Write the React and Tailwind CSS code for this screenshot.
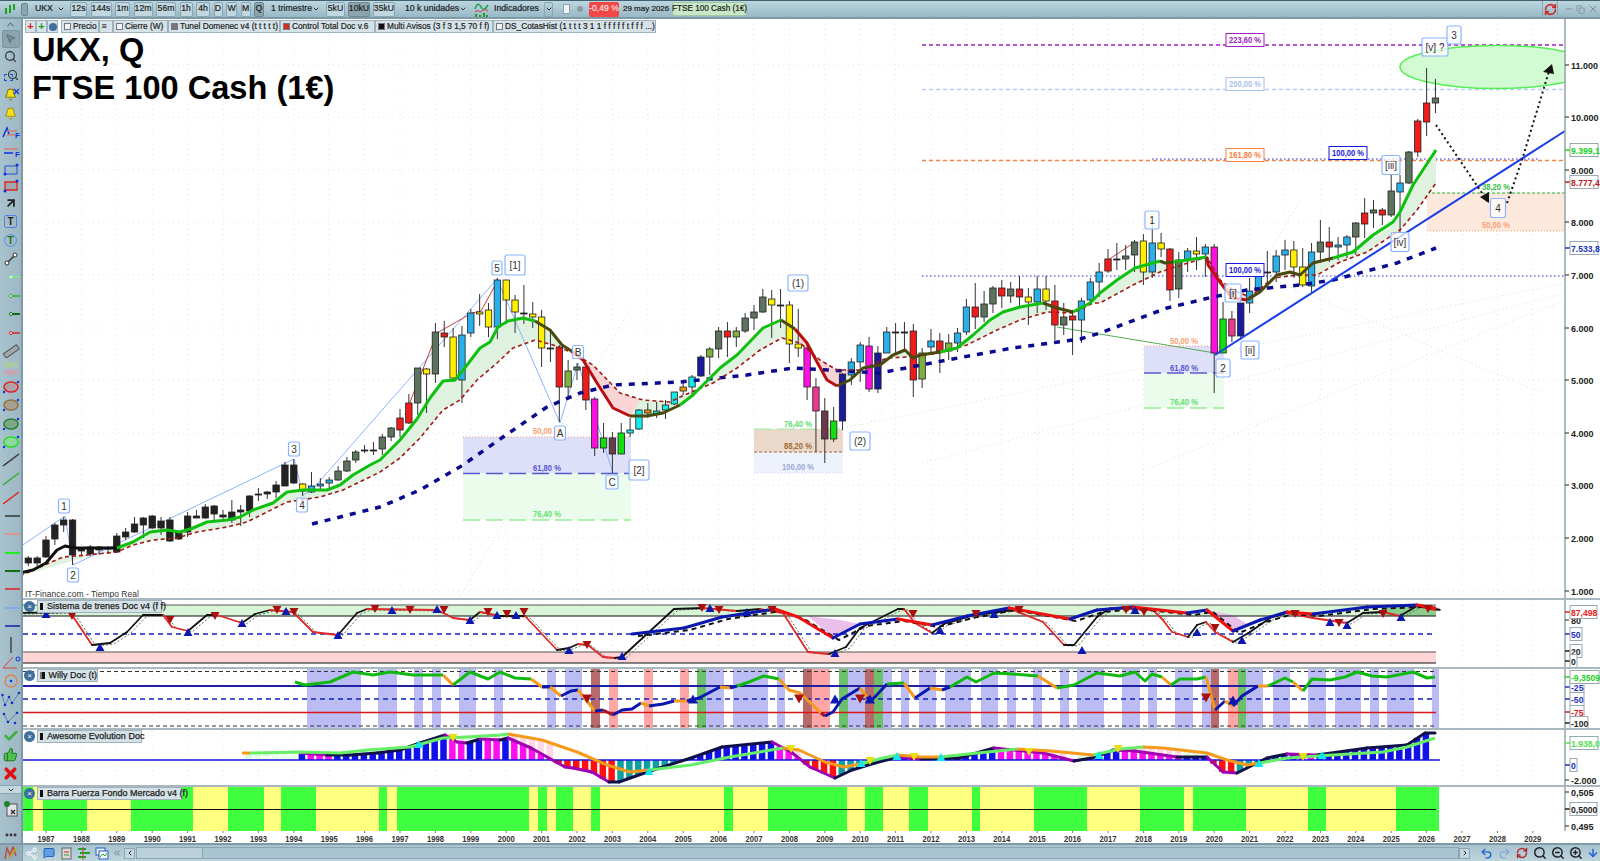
import React from "react";
import { Search, ZoomIn, ZoomOut, Undo2, Redo2, Share2, MessageSquare, Check, ThumbsUp, X, ChevronDown, ChevronUp, ChevronLeft, ChevronRight, ChevronsLeft, RefreshCw, Minus, Copy, MoreHorizontal, MousePointer2, Bell, ArrowDown } from "lucide-react";

const colors = { k: "#222222", g: "#5d735d", r: "#f01c1c", y: "#fff000", b: "#29b0e8", m: "#ff10e0", c: "#14ecec", G: "#10e010", d: "#6b3a4a", n: "#1a1a9a", p: "#e83a90", o: "#f09010", l: "#7fb040" };

// x, body top, body bottom, wick top, wick bottom, colour
const candles = [
  [28,558,563,556,566,"k"],[38,558,563,556,566,"k"],[46,540,557,536,558,"k"],[56,525,539,523,545,"k"],[64,520,525,517,532,"k"],[73,520,555,519,565,"k"],
  [83,548,551,548,556,"k"],[91,547,554,545,556,"k"],[100,547,550,546,555,"k"],[109,548,549,546,554,"k"],[117,536,552,533,553,"k"],[126,532,537,528,540,"k"],
  [135,524,532,517,533,"k"],[144,518,525,517,538,"k"],[152,516,528,515,529,"k"],[161,521,528,517,535,"k"],[170,520,541,517,542,"k"],[179,532,539,531,540,"k"],
  [188,516,532,512,537,"k"],[196,516,518,510,518,"k"],[205,507,518,504,519,"k"],[214,506,514,505,520,"k"],[223,515,517,510,521,"k"],[232,512,520,500,523,"k"],
  [241,510,512,505,526,"k"],[250,496,511,495,517,"k"],[258,494,495,488,501,"k"],[267,492,494,491,499,"k"],[276,485,492,481,498,"k"],[285,465,486,462,486,"k"],
  [294,465,483,459,484,"k"],[303,484,491,483,496,"y"],[312,486,492,472,493,"b"],[321,484,486,478,491,"b"],[329,480,483,477,489,"b"],[338,471,480,466,481,"g"],
  [347,461,471,457,472,"g"],[356,452,460,450,463,"g"],[365,450,450,445,453,"k"],[374,450,450,442,455,"k"],[382,437,449,434,455,"g"],[391,428,437,427,441,"g"],
  [400,418,430,409,437,"r"],[409,403,423,394,424,"r"],[418,368,403,368,415,"g"],[428,369,374,368,413,"y"],[437,332,374,323,383,"g"],[445,333,337,321,347,"r"],
  [454,337,378,328,382,"y"],[463,335,380,326,403,"b"],[472,313,333,309,337,"b"],[481,312,314,294,326,"y"],[489,310,327,303,337,"y"],[498,280,327,278,339,"b"],
  [507,280,300,280,324,"y"],[516,300,312,295,333,"y"],[525,313,313,285,324,"k"],[533,314,317,302,328,"y"],[542,317,348,310,367,"y"],[551,348,348,330,362,"k"],
  [560,347,387,345,422,"r"],[569,371,387,360,397,"l"],[578,367,370,363,380,"g"],[587,367,400,367,410,"r"],[596,399,448,397,456,"m"],[604,438,448,423,453,"G"],
  [613,438,454,432,473,"d"],[622,433,454,423,454,"G"],[631,430,433,418,437,"c"],[640,410,429,409,430,"c"],[648,410,413,403,418,"o"],[657,411,414,402,418,"c"],
  [666,405,410,400,419,"c"],[675,392,404,392,405,"c"],
  [684,387,391,383,395,"o"],[693,377,387,375,395,"c"],[702,357,376,355,377,"n"],[710,349,357,347,375,"l"],[719,331,349,327,358,"g"],[728,331,337,322,357,"r"],
  [737,331,337,327,347,"l"],[746,318,331,313,333,"g"],[754,312,318,305,330,"g"],[763,297,312,289,313,"g"],[773,299,305,290,338,"y"],[781,305,305,289,328,"k"],
  [790,305,344,301,363,"y"],[799,344,348,309,357,"y"],[808,348,387,345,400,"m"],[816,387,411,378,452,"p"],[825,411,439,398,463,"d"],[834,421,439,407,442,"G"],
  [843,374,421,373,430,"n"],[852,362,375,358,385,"b"],[860,345,362,342,382,"b"],[869,346,389,337,392,"m"],[878,353,389,346,393,"n"],[887,332,353,327,353,"b"],
  [896,332,332,323,355,"k"],[905,332,333,322,350,"k"],[914,331,380,324,397,"r"],[923,353,379,348,388,"l"],[932,341,347,329,355,"b"],[940,341,351,333,373,"r"],
  [949,343,351,334,360,"l"],[958,333,343,328,352,"b"],[967,307,332,299,335,"b"],[976,307,317,283,329,"r"],[985,304,317,291,322,"g"],[993,288,304,286,313,"g"],
  [1002,288,296,280,308,"r"],[1011,289,296,282,303,"g"],[1020,289,297,276,308,"r"],[1029,297,302,288,325,"y"],[1038,289,302,276,313,"b"],[1047,289,301,276,310,"y"],
  [1056,301,325,285,340,"r"],[1064,317,325,303,335,"g"],[1073,316,320,310,355,"r"],[1082,301,320,298,343,"b"],[1091,282,300,278,302,"b"],
  [1101,272,282,263,297,"b"],[1108,259,271,249,273,"r"],[1117,259,259,243,270,"k"],[1126,256,259,245,270,"g"],[1135,242,255,240,272,"g"],[1144,241,272,234,285,"y"],
  [1153,243,272,220,278,"b"],[1162,243,249,233,257,"y"],[1170,249,290,248,301,"r"],[1179,260,289,252,298,"g"],[1188,251,260,248,272,"b"],[1197,251,254,237,270,"y"],
  [1206,247,254,244,277,"b"],[1215,247,353,244,393,"m"],[1224,319,353,302,353,"G"],[1233,319,336,311,342,"p"],[1241,303,336,303,340,"n"],[1250,291,303,278,313,"b"],
  [1259,276,291,267,292,"b"],[1268,272,272,251,290,"k"],[1277,256,272,250,282,"b"],[1286,250,255,240,270,"b"],[1295,250,267,241,278,"y"],[1303,267,285,248,287,"y"],
  [1312,252,286,243,292,"b"],[1321,242,252,220,263,"g"],[1330,242,247,227,262,"r"],[1339,245,247,237,260,"b"],[1347,237,245,235,258,"b"],[1356,223,237,222,255,"g"],
  [1366,213,224,198,238,"r"],[1374,210,213,200,228,"g"],[1383,210,215,208,225,"r"],[1392,191,215,175,217,"g"],[1401,183,192,175,233,"b"],[1410,152,183,151,184,"g"],
  [1418,121,152,119,157,"r"],[1427,103,122,68,136,"r"],[1436,98,103,79,113,"g"],
];

const black1 = [[20,573],[33,570],[46,563],[57,550],[65,546],[75,548],[117,548]];
const green1 = [[117,548],[133,542],[150,532],[167,530],[180,532],[193,528],[207,522],[227,520],[240,517],[253,510],[273,503],[287,492],[303,490],[327,490],[340,485],[353,475],[370,465],[380,460],[400,440],[417,419],[430,398],[443,381],[455,380],[467,365],[480,348],[490,342],[498,327],[508,321],[523,318],[535,321]];
const dark1 = [[535,321],[550,330],[562,345],[573,352]];
const red1 = [[573,352],[583,360],[597,383],[613,408],[630,416]];
const dark2 = [[630,416],[647,416],[663,413],[680,405]];
const green2 = [[680,405],[693,395],[710,378],[720,368],[737,355],[763,328],[781,320]];
const dark3 = [[781,320],[795,329]];
const red2 = [[795,329],[807,343],[817,362],[827,380],[837,386]];
const dark4 = [[837,386],[850,380],[863,368],[880,365],[893,355],[905,350],[913,358],[920,355],[940,352]];
const green3 = [[940,352],[957,348],[973,335],[990,320],[1003,312],[1020,307],[1043,303]];
const dark5 = [[1043,303],[1057,308],[1073,312]];
const green4 = [[1073,312],[1090,303],[1100,293],[1117,280],[1135,268],[1160,261]];
const dark6 = [[1160,261],[1165,263],[1173,262]];
const green5 = [[1173,262],[1207,257]];
const red3 = [[1207,257],[1208,265],[1217,278],[1232,298],[1247,300]];
const dark7 = [[1247,300],[1260,292],[1277,275],[1290,272],[1300,275],[1313,263],[1333,258]];
const green6 = [[1333,258],[1353,252],[1373,235],[1393,222],[1400,212],[1413,185],[1436,150]];
const fast = [...black1,...green1,...dark1,...red1,...dark2,...green2,...dark3,...red2,...dark4,...green3,...dark5,...green4,...dark6,...green5,...red3,...dark7,...green6];
const slow = [[20,576],[40,567],[63,557],[87,555],[117,552],[133,545],[153,540],[177,538],[197,532],[227,527],[247,522],[267,512],[287,502],[320,497],[343,490],[370,477],[380,472],[400,458],[420,438],[443,410],[460,400],[477,380],[497,363],[513,348],[535,340],[553,345],[573,353],[593,365],[620,393],[643,400],[670,402],[680,397],[713,383],[737,368],[760,350],[782,338],[800,343],[820,360],[837,370],[860,370],[887,358],[907,357],[940,353],[967,345],[997,330],[1020,320],[1047,312],[1073,313],[1093,303],[1100,303],[1133,285],[1160,272],[1207,257],[1220,280],[1233,290],[1250,297],[1273,278],[1297,275],[1317,275],[1340,262],[1367,252],[1400,230],[1417,210],[1436,183]];
const navyMa = [[312,524],[380,507],[420,490],[463,465],[503,437],[547,407],[580,393],[613,385],[680,382],[747,375],[793,368],[880,373],[947,360],[1013,348],[1080,339],[1100,333],[1167,308],[1213,297],[1247,290],[1300,285],[1333,280],[1397,263],[1436,248]];

const waveLabels = [
  [64,506,"1",11,14],[73,575,"2",11,14],[294,449,"3",11,14],[302,505,"4",11,14],[497,268,"5",10,14],[515,265,"[1]",20,20],[560,433,"A",11,14],[578,352,"B",11,13],
  [612,482,"C",12,14],[639,470,"[2]",20,20],[798,283,"(1)",20,16],[860,441,"(2)",20,18],[1152,220,"1",14,18],[1391,165,"[iii]",18,19],[1400,242,"[iv]",18,19],
  [1435,47,"[v] ?",26,18],[1454,35,"3",14,18],[1498,208,"4",15,19],[1223,368,"2",14,18],[1250,350,"[ii]",18,18],[1233,293,"[i]",16,18],
];

const fibLabels = [
  [547,431,"50,00 %","#f9a070"],[547,468,"61,80 %","#5858d0"],[547,514,"76,40 %","#60e070"],[798,424,"76,40 %","#60e070"],[798,446,"88,20 %","#a06a30"],[798,467,"100,00 %","#9aa8d8"],
  [1184,341,"50,00 %","#f9a070"],[1184,368,"61,80 %","#5858d0"],[1184,402,"76,40 %","#60e070"],[1496,187,"38,20 %","#30c040"],[1496,225,"50,00 %","#f9a070"],
];

const boxedLabels = [
  [1245,40,"223,60 %","#a020c0"],[1245,84,"200,00 %","#a8c0f0"],[1245,155,"161,80 %","#f98040"],[1348,153,"100,00 %","#1818e0"],[1245,270,"100,00 %","#1818e0"],
];

const trend1 = [[20,613],[70,612],[92,645],[110,643],[127,632],[143,615],[163,615],[172,627],[188,631],[207,615],[217,615],[242,623],[255,614],[270,610],[293,612],[313,632],[338,635],[357,613],[367,609],[437,610],[453,618],[470,620],[480,612],[500,616],[525,616],[557,650],[569,648],[578,644],[588,645],[603,657],[615,658],[622,657],[674,609],[703,608],[737,611],[760,609],[783,613],[808,652],[829,654],[846,647],[860,628],[898,609],[904,609],[915,623],[932,633],[944,624],[975,615],[1013,610],[1043,622],[1064,645],[1074,645],[1097,617],[1110,608],[1153,610],[1163,620],[1172,632],[1188,637],[1197,625],[1206,622],[1215,632],[1233,642],[1250,632],[1270,618],[1287,613],[1313,618],[1347,623],[1363,613],[1383,612],[1400,616],[1417,606],[1435,610]];
const trend2 = [[632,634],[684,628],[722,617],[775,609],[798,617],[833,638],[860,624],[898,619],[932,625],[967,616],[1009,608],[1070,619],[1097,610],[1133,607],[1187,613],[1207,610],[1233,631],[1260,620],[1287,612],[1313,614],[1367,607],[1417,605],[1435,608]];
const blueUp1 = [[46,614],[100,647],[188,632],[242,623],[286,611],[338,635],[392,610],[437,609],[470,620],[497,615],[516,615],[569,650],[622,656],[710,608],[747,612],[835,653],[940,630],[994,614],[1082,650],[1135,610],[1197,632],[1242,640],[1330,622],[1347,625],[1401,617]];
const redDown1 = [[72,616],[170,620],[215,616],[277,610],[294,612],[375,609],[410,610],[444,610],[488,612],[507,614],[524,612],[587,645],[702,608],[719,610],[772,610],[913,614],[976,614],[1019,610],[1126,610],[1144,612],[1215,628],[1295,614],[1339,623],[1383,614],[1428,609]];

const willyBars = [
  [307,361,"b"],[378,397,"b"],[414,423,"b"],[432,441,"b"],[459,476,"b"],[494,503,"b"],[547,556,"b"],[565,582,"b"],[591,600,"d"],[609,618,"p"],[644,653,"p"],[680,689,"p"],[697,706,"g"],[706,724,"b"],[733,768,"b"],[777,785,"b"],
  [803,812,"d"],[812,830,"p"],[839,848,"g"],[848,865,"b"],[865,874,"d"],[874,883,"g"],[883,892,"b"],[901,909,"b"],[919,936,"b"],[945,971,"b"],[981,998,"b"],[1007,1016,"b"],[1033,1042,"b"],[1060,1069,"b"],[1077,1104,"b"],
  [1122,1140,"b"],[1148,1157,"b"],[1175,1193,"b"],[1202,1211,"b"],[1211,1219,"d"],[1228,1238,"p"],[1238,1246,"g"],[1246,1263,"b"],[1273,1290,"b"],[1308,1326,"b"],[1335,1361,"b"],[1370,1379,"b"],[1387,1414,"b"],[1432,1439,"b"],
];
const willyColor = { b: "#bcbcf4", d: "#b86a6a", p: "#ffa6a6", g: "#6cc06c" };

const G = "#10b810", O = "#f59a1a", B = "#0a18b0", R = "#a81030";
const willyLine = [
  [G,[[295,682],[305,685],[330,682],[353,672],[373,675],[390,672],[413,675],[443,675]]],[O,[[443,675],[453,685]]],[G,[[453,685],[470,672],[488,679],[500,672],[515,678],[531,679]]],[O,[[531,679],[542,687]]],[B,[[542,687],[550,687]]],[O,[[550,687],[561,696]]],[B,[[561,696],[571,691],[578,690]]],[O,[[578,690],[595,711]]],[B,[[595,711],[603,710]]],[R,[[603,710],[613,715]]],[B,[[613,715],[622,710],[632,709],[641,703]]],[O,[[641,703],[649,706]]],[B,[[649,706],[663,704],[674,701]]],[O,[[674,701],[687,701]]],[B,[[687,701],[699,698],[720,687]]],[O,[[720,687],[730,688]]],[B,[[730,688],[737,686]]],[G,[[737,686],[749,682],[764,676],[779,679]]],[O,[[779,679],[789,690],[800,693],[821,713]]],[R,[[821,713],[825,716]]],[B,[[825,716],[833,712],[842,699],[860,688]]],[O,[[860,688],[867,697]]],[B,[[867,697],[871,701],[887,684]]],[G,[[887,684],[904,683]]],[O,[[904,683],[915,698]]],[B,[[915,698],[930,688]]],[O,[[930,688],[942,690]]],[B,[[942,690],[950,687]]],[G,[[950,687],[967,677],[976,682],[994,673],[1013,674],[1038,676]]],[O,[[1038,676],[1057,688]]],[G,[[1057,688],[1074,685],[1097,673],[1120,676],[1135,672],[1145,681],[1152,674],[1162,677]]],[O,[[1162,677],[1171,685]]],[G,[[1171,685],[1180,679],[1197,679],[1206,677]]],[O,[[1206,677],[1215,710]]],[B,[[1215,710],[1225,701]]],[O,[[1225,701],[1233,706]]],[B,[[1233,706],[1242,696],[1258,686]]],[O,[[1258,686],[1268,686]]],[G,[[1268,686],[1285,678],[1293,682]]],[O,[[1293,682],[1303,691]]],[G,[[1303,691],[1312,679],[1330,680],[1345,677],[1357,672],[1372,676],[1387,677],[1413,672],[1427,678],[1435,677]]],
];

const sigGreen = "#66ee66";
const signal = [
  [O,[[242,753],[250,753]]],[sigGreen,[[250,753],[300,752],[340,753],[367,750],[410,747],[443,738],[467,737],[500,735],[508,734]]],[O,[[508,734],[542,740],[577,752],[607,765],[630,772],[649,770]]],[sigGreen,[[649,770],[691,765],[730,757],[783,748]]],[O,[[783,748],[799,750],[825,762],[844,767],[860,764]]],[sigGreen,[[860,764],[883,758],[898,755]]],[O,[[898,755],[921,757],[940,757]]],[sigGreen,[[940,757],[978,753],[1017,749]]],[O,[[1017,749],[1051,751],[1093,755]]],[sigGreen,[[1093,755],[1120,749],[1143,747]]],[O,[[1143,747],[1163,748],[1207,753],[1227,760],[1247,765],[1260,763]]],[sigGreen,[[1260,763],[1287,758],[1333,755],[1383,752],[1407,747],[1435,738]]],
];
const signalPts = signal.flatMap((s) => s[1]);
const macd = [[250,758],[300,753],[327,755],[350,755],[377,753],[400,750],[420,743],[445,735],[457,742],[467,743],[480,739],[500,740],[508,738],[531,748],[565,767],[573,768],[592,772],[609,782],[619,782],[653,770],[691,758],[722,747],[772,742],[791,752],[810,767],[835,778],[852,770],[875,763],[898,757],[921,759],[959,758],[994,748],[1043,753],[1074,761],[1097,757],[1113,750],[1135,751],[1177,757],[1207,757],[1223,772],[1237,773],[1267,758],[1287,754],[1317,755],[1367,748],[1407,745],[1425,733],[1435,733]];
const awesomeUp = [[419,744],[649,771],[861,763],[897,756],[941,757],[1099,755],[1259,763],[1322,755]];
const awesomeDown = [[453,738],[791,749],[870,761],[914,757],[1029,752],[1118,749],[1303,757]];

const strength = [[23,33,1],[33,43,0],[43,87,1],[87,131,0],[131,193,1],[193,228,0],[228,264,1],[264,281,0],[281,316,1],[316,379,0],[379,387,1],[387,397,0],[397,529,1],[529,538,0],[538,547,1],[547,556,0],[556,573,1],[573,591,0],[591,600,1],[600,724,0],[724,733,1],[733,768,0],[768,847,1],[847,865,0],[865,883,1],[883,909,0],[909,928,1],[928,972,0],[972,980,1],[980,1034,0],[1034,1087,1],[1087,1140,0],[1140,1184,1],[1184,1193,0],[1193,1246,1],[1246,1308,0],[1308,1326,1],[1326,1396,0],[1396,1439,1]];

const pts = (list) => list.map((p) => p.join(",")).join(" ");
const snap = (x) => 46 + Math.round((x - 46) / 8.85) * 8.85;
const interp = (list, x) => {
  for (let i = 1; i < list.length; i++) {
    if (x <= list[i][0]) {
      const [x0, y0] = list[i - 1];
      const [x1, y1] = list[i];
      return y0 + ((y1 - y0) * (x - x0)) / (x1 - x0 || 1);
    }
  }
  return list[list.length - 1][1];
};

const Line = ({ p, c, w = 2, dash }) => <polyline points={pts(p)} fill="none" stroke={c} strokeWidth={w} strokeDasharray={dash} strokeLinejoin="round" />;

const SlopeLine = ({ p, up, down, w }) =>
  p.slice(1).map((q, i) => <line key={i} x1={p[i][0]} y1={p[i][1]} x2={q[0]} y2={q[1]} stroke={q[1] > p[i][1] ? down : up} strokeWidth={w} strokeLinecap="round" />);

const TriUp = ({ x, y, c, s = 4 }) => <polygon points={`${x},${y - s} ${x - s - 0.5},${y + s} ${x + s + 0.5},${y + s}`} fill={c} />;
const TriDown = ({ x, y, c, s = 4 }) => <polygon points={`${x},${y + s} ${x - s - 0.5},${y - s} ${x + s + 0.5},${y - s}`} fill={c} />;

const Grid = ({ y0, y1, rows = [] }) => (
  <g stroke="#e4e6e8" strokeWidth="1" strokeDasharray="1 4">
    {rows.map((y) => <line key={y} x1="23" x2="1565" y1={y} y2={y} />)}
    {Array.from({ length: 43 }, (_, i) => 46 + i * 35.4).map((x) => <line key={x} x1={x} x2={x} y1={y0} y2={y1} />)}
  </g>
);

const AxisLine = ({ y0, y1 }) => <line x1="1565" x2="1565" y1={y0} y2={y1} stroke="#90a4ae" strokeWidth="1.5" />;

const AxisText = ({ y, t, c = "#222222" }) => (
  <g>
    <line x1="1565" x2="1569" y1={y} y2={y} stroke={c} />
    <text x="1571" y={y + 3.5} fontSize="9" fontWeight="700" fill={c}>{t}</text>
  </g>
);

const AxisTag = ({ y, t, c, w = 28 }) => (
  <g>
    <line x1="1565" x2="1570" y1={y} y2={y} stroke={c} strokeWidth="1.5" />
    <rect x="1570" y={y - 6.5} width={w} height="13" fill="#ffffff" stroke="#9aa8b0" />
    <text x="1571" y={y + 3.5} fontSize="8.6" fontWeight="700" fill={c}>{t}</text>
  </g>
);

const MainChart = () => (
  <svg width="1577" height="579" viewBox="23 19 1577 579" className="block">
    <Grid y0={19} y1={598} rows={[65, 117, 170, 222, 275, 328, 380, 433, 485, 538, 591]} />
    <g stroke="#dcdcdc" strokeWidth="1" strokeDasharray="1 3" fill="none">
      <line x1="460" y1="596" x2="630" y2="310" />
      <line x1="843" y1="428" x2="1565" y2="283" />
      <line x1="923" y1="463" x2="1565" y2="293" />
      <line x1="1145" y1="470" x2="1565" y2="300" />
      <line x1="1162" y1="233" x2="1540" y2="392" />
      <line x1="827" y1="462" x2="1020" y2="285" />
      <line x1="1224" y1="330" x2="1300" y2="200" />
    </g>

    {/* fibo zones */}
    <rect x="463" y="437" width="168" height="36.5" fill="#dedff8" />
    <rect x="463" y="473.5" width="168" height="46.5" fill="#ecfcec" />
    <line x1="463" x2="631" y1="437" y2="437" stroke="#f9a070" strokeDasharray="1 2" />
    <line x1="463" x2="631" y1="473.5" y2="473.5" stroke="#5858d0" strokeWidth="1.5" strokeDasharray="17 6" />
    <line x1="463" x2="631" y1="520" y2="520" stroke="#98ec98" strokeWidth="1.5" strokeDasharray="17 6" />
    <rect x="754" y="429" width="89" height="23" fill="#ead9cb" />
    <rect x="754" y="452" width="89" height="21" fill="#eef2fd" />
    <line x1="754" x2="843" y1="429" y2="429" stroke="#98ec98" strokeDasharray="17 6" />
    <line x1="754" x2="843" y1="452" y2="452" stroke="#9a6a3a" strokeDasharray="3 2" />
    <line x1="754" x2="843" y1="473" y2="473" stroke="#c8d4f4" strokeDasharray="1 2" />
    <rect x="1144" y="346" width="80" height="27" fill="#dedff8" />
    <rect x="1144" y="373" width="80" height="35" fill="#ecfcec" />
    <line x1="1144" x2="1224" y1="346" y2="346" stroke="#f9a070" strokeDasharray="1 2" />
    <line x1="1144" x2="1224" y1="373" y2="373" stroke="#5858d0" strokeWidth="1.5" strokeDasharray="17 6" />
    <line x1="1144" x2="1224" y1="408" y2="408" stroke="#98ec98" strokeWidth="1.5" strokeDasharray="17 6" />
    <rect x="1427" y="193" width="138" height="38" fill="#fde8dc" />
    <line x1="1427" x2="1565" y1="193" y2="193" stroke="#20b030" strokeDasharray="3 2" />
    <line x1="1427" x2="1565" y1="231" y2="231" stroke="#f9a070" strokeDasharray="1 2" />

    {/* horizontal levels */}
    <line x1="922" x2="1565" y1="45" y2="45" stroke="#a020c0" strokeWidth="1.5" strokeDasharray="4 3" />
    <line x1="922" x2="1565" y1="89.5" y2="89.5" stroke="#b8ccf6" strokeWidth="1.5" strokeDasharray="4 3" />
    <line x1="922" x2="1565" y1="160.5" y2="160.5" stroke="#f98040" strokeWidth="1.5" strokeDasharray="4 3" />
    <line x1="1152" x2="1540" y1="159" y2="159" stroke="#7070f0" strokeWidth="1.5" strokeDasharray="1.5 2.5" />
    <line x1="922" x2="1565" y1="276" y2="276" stroke="#7070f0" strokeWidth="1.5" strokeDasharray="1.5 2.5" />

    {/* target ellipse */}
    <clipPath id="plot"><rect x="23" y="19" width="1542" height="579" /></clipPath>
    <ellipse cx="1497" cy="67" rx="97" ry="21.5" fill="#d3fbd3" stroke="#55ee55" strokeWidth="1.5" clipPath="url(#plot)" />

    {/* averages */}
    <polygon points={pts([...fast.slice(6), ...[...slow].reverse()])} fill="#dff2df" />
    <polygon points={pts([...red1, [640,400], [620,393], [593,365]])} fill="#fbd5d5" />
    <polygon points={pts([...red2, [850,372], [860,370], [837,370], [820,360], [800,343]])} fill="#fbd5d5" />
    <polygon points={pts([...red3, [1250,297], [1233,290], [1220,280]])} fill="#fbd5d5" />

    {/* thin wave lines */}
    <Line p={[[20,547],[65,516],[73,565],[294,459],[303,495],[312,490],[497,279],[560,423],[578,363],[613,473]]} c="#8ab4ff" w={1} />
    <Line p={[[405,415],[437,333],[472,313],[481,311],[498,280]]} c="#c04040" w={1} />
    <Line p={[[1108,260],[1135,242]]} c="#c04040" w={1} />
    <Line p={[[1057,327],[1215,353]]} c="#55aa55" w={1} />

    {/* candles */}
    {candles.map(([x, t, b, wt, wb, c], i) => {
      const cx = snap(x);
      return (
        <g key={i}>
          <line x1={cx} x2={cx} y1={wt} y2={wb} stroke="#333333" strokeWidth="1" />
          <rect x={cx - 3.2} y={t} width="6.4" height={Math.max(b - t, 1)} fill={colors[c]} stroke="#222222" strokeWidth="0.8" />
        </g>
      );
    })}

    <Line p={navyMa} c="#0a0a90" w={3.5} dash="6 7" />
    <Line p={slow} c="#a01818" w={1.6} dash="4 3" />
    <Line p={black1} c="#111111" w={3} />
    {[green1, green2, green3, green4, green5, green6].map((p, i) => <Line key={i} p={p} c="#10c010" w={3} />)}
    {[dark1, dark2, dark3, dark4, dark5, dark6, dark7].map((p, i) => <Line key={i} p={p} c="#4a4a10" w={3} />)}
    {[red1, red2, red3].map((p, i) => <Line key={i} p={p} c="#b81010" w={3} />)}

    <line x1="1215" y1="355" x2="1565" y2="131" stroke="#1a3fe8" strokeWidth="2" />
    <Line p={[[1436,125],[1488,202]]} c="#111111" w={2} dash="2 3" />
    <Line p={[[1507,203],[1522,160],[1550,68]]} c="#111111" w={2} dash="2 3" />
    <polygon points="1480,197 1489,192 1489,203" fill="#111111" />
    <polygon points="1552,64 1543,72 1554,74" fill="#111111" />

    {fibLabels.map(([x, y, t, c]) => <text key={x + t + y} x={x} y={y + 3} textAnchor="middle" fontSize="9" fontWeight="700" fill={c} textLength={t.length === 7 ? 28 : 32} lengthAdjust="spacingAndGlyphs">{t}</text>)}
    {boxedLabels.map(([x, y, t, c]) => (
      <g key={x + t + y}>
        <rect x={x - 19} y={y - 6.5} width="38" height="13" fill="#ffffff" stroke={c} />
        <text x={x} y={y + 3} textAnchor="middle" fontSize="9" fontWeight="700" fill={c} textLength="32" lengthAdjust="spacingAndGlyphs">{t}</text>
      </g>
    ))}
    {waveLabels.map(([x, y, t, w, h]) => (
      <g key={x + t}>
        <rect x={x - w / 2} y={y - h / 2} width={w} height={h} rx="2" fill="#ffffff" fillOpacity="0.75" stroke="#8ab4ff" strokeWidth="1.2" />
        <text x={x} y={y + 3.5} textAnchor="middle" fontSize="10" fill="#333333">{t}</text>
      </g>
    ))}
    <text x="25" y="597" fontSize="8.5" fill="#333333">IT-Finance.com - Tiempo Real</text>

    <AxisLine y0={19} y1={598} />
    {["11.000","10.000","9.000","8.000","7.000","6.000","5.000","4.000","3.000","2.000","1.000"].map((t, i) => (
      <AxisText key={t} y={[65,117,170,222,275,328,380,433,485,538,591][i]} t={t} />
    ))}
    <AxisTag y={150} t="9.399,1" c="#20d020" w={28} />
    <AxisTag y={182} t="8.777,4" c="#c02020" w={28} />
    <AxisTag y={248} t="7.533,8" c="#2030c0" w={28} />
  </svg>
);

const PanelTag = ({ title, icon = "#777777", w }) => (
  <div className="absolute left-[1px] top-[0px] flex items-center">
    <span className="w-[11px] h-[11px] rounded-full bg-[#3f6f9c] text-white text-[8px] leading-[11px] text-center">×</span>
    <div className="ml-[2px] flex items-center h-[13px] bg-[#d5e3e8] border border-[#9fb2bb]" style={{ width: w }}>
      <span className="w-[7px] h-[7px] ml-[2px] border-r-[3px]" style={{ background: icon, borderColor: "#111111" }} />
      <span className="ml-[4px] text-[9px] [-webkit-text-stroke:0.25px_#222222] text-[#222222] whitespace-nowrap">{title}</span>
    </div>
  </div>
);

const SistemaPanel = () => (
  <svg width="1577" height="67" viewBox="23 600 1577 67" className="block">
    <Grid y0={600} y1={667} />
    <rect x="23" y="605" width="1413" height="11" fill="#d8f5d8" />
    <rect x="23" y="652" width="1413" height="11" fill="#ffd5d5" />
    <polygon points="1385,608 1417,605 1436,608 1436,616 1385,616" fill="#8ccc8c" />
    <polygon points="1207,610 1233,631 1247,624 1233,615" fill="#eac0ea" />
    <polygon points="808,616 833,638 860,624 840,620" fill="#eac0ea" />
    <line x1="23" x2="1436" y1="605" y2="605" stroke="#555555" />
    <line x1="23" x2="1436" y1="616" y2="616" stroke="#111111" />
    <line x1="23" x2="1436" y1="634" y2="634" stroke="#1020c0" strokeWidth="1.5" strokeDasharray="5 4" />
    <line x1="23" x2="1436" y1="652" y2="652" stroke="#555555" />
    <line x1="23" x2="1436" y1="663" y2="663" stroke="#111111" />
    <polyline points={pts(trend1.map(([x, y]) => [x + 4, y + 1]))} fill="none" stroke="#557755" strokeWidth="1" strokeDasharray="2 2" />
    <SlopeLine p={trend1} up="#111111" down="#e02828" w={1.8} />
    <polyline points={pts(trend2.map(([x, y]) => [x + 6, y + 2]))} fill="none" stroke="#111111" strokeWidth="2" strokeDasharray="5 4" />
    <SlopeLine p={trend2} up="#0a18b0" down="#f01010" w={3} />
    {blueUp1.map(([x, y]) => <TriUp key={x} x={x} y={y} c="#0a18b0" />)}
    {redDown1.map(([x, y]) => <TriDown key={x} x={x} y={y} c="#a81010" />)}
    <AxisLine y0={600} y1={667} />
    <AxisText y={620} t="80" />
    <AxisTag y={634} t="50" c="#2030c0" w={12} />
    <AxisTag y={651} t="20" c="#222222" w={12} />
    <AxisTag y={661} t="0" c="#222222" w={7} />
    <AxisTag y={612} t="87,498" c="#e82020" w={27} />
  </svg>
);

const WillyPanel = () => (
  <svg width="1577" height="59" viewBox="23 669 1577 59" className="block">
    <Grid y0={669} y1={728} />
    {willyBars.map(([a, b, k]) => <rect key={a} x={a} y="669" width={b - a} height="59" fill={willyColor[k]} />)}
    <line x1="23" x2="1436" y1="671.5" y2="671.5" stroke="#333333" strokeWidth="1.2" strokeDasharray="4 3" />
    <line x1="23" x2="1436" y1="686" y2="686" stroke="#2020a0" strokeWidth="1.8" />
    <line x1="23" x2="1436" y1="699" y2="699" stroke="#1020c0" strokeWidth="1.5" strokeDasharray="5 4" />
    <line x1="23" x2="1436" y1="712.5" y2="712.5" stroke="#d81818" strokeWidth="1.5" />
    <line x1="23" x2="1436" y1="726" y2="726" stroke="#333333" strokeWidth="1.2" strokeDasharray="4 3" />
    {willyLine.map(([c, p], i) => <Line key={i} p={p} c={c} w={3} />)}
    {[[587,699],[799,699],[860,699],[1206,698]].map(([x, y]) => <TriDown key={x} x={x} y={y} c="#a81010" s={4.5} />)}
    {[[693,699],[835,699],[870,699],[1233,700]].map(([x, y]) => <TriUp key={x} x={x} y={y} c="#0a18b0" s={4.5} />)}
    <AxisLine y0={669} y1={728} />
    <AxisTag y={687} t="-25" c="#2030c0" w={14} />
    <AxisTag y={699} t="-50" c="#2030c0" w={14} />
    <AxisTag y={712} t="-75" c="#d81818" w={14} />
    <AxisTag y={723} t="-100" c="#222222" w={18} />
    <AxisTag y={677} t="-9,3509" c="#20d020" w={29} />
  </svg>
);

const AwesomePanel = () => {
  const bars = Array.from({ length: 134 }, (_, i) => 46 + (i + 23) * 8.85).filter((x) => x <= 1440);
  return (
    <svg width="1577" height="55" viewBox="23 730 1577 55" className="block">
      <Grid y0={730} y1={785} />
      {bars.map((x) => {
        const m = interp(macd, x);
        const prev = interp(macd, x - 8.85);
        const s = interp(signalPts, x);
        const rising = m <= prev;
        let fill = m < 760 ? (rising ? "#1010e8" : "#ff10ee") : rising ? "#0ea0a0" : "#ff1010";
        if (x < 295) fill = "#e8ffe8";
        return (
          <g key={x}>
            {s < m - 1 && m < 760 && <rect x={x - 4} y={s} width="6.5" height={m - s} fill={rising ? "#dcfadc" : "#ffd6e6"} />}
            <rect x={x - 4} y={Math.min(m, 760)} width="6.5" height={Math.abs(760 - m)} fill={fill} />
          </g>
        );
      })}
      <line x1="23" x2="1440" y1="760" y2="760" stroke="#1414e0" strokeWidth="1.6" />
      <SlopeLine p={macd.slice(1)} up="#10104a" down="#a000b0" w={3} />
      {signal.map(([c, p], i) => <Line key={i} p={p} c={c} w={3} />)}
      {awesomeUp.map(([x, y]) => <TriUp key={x} x={x} y={y} c="#10e8f0" />)}
      {awesomeDown.map(([x, y]) => <TriDown key={x} x={x} y={y} c="#e8e010" />)}
      <AxisLine y0={730} y1={785} />
      <AxisTag y={765} t="0" c="#2030c0" w={7} />
      <AxisText y={780} t="-2.000" />
      <AxisTag y={743} t="1.938,0" c="#50e050" w={28} />
    </svg>
  );
};

const FuerzaPanel = () => (
  <svg width="1577" height="44" viewBox="23 787 1577 44" className="block">
    {strength.map(([a, b, on]) => <rect key={a} x={a} y="787" width={b - a} height="44" fill={on ? "#40ff40" : "#ffff80"} />)}
    <line x1="23" x2="1436" y1="809.5" y2="809.5" stroke="#111111" />
    <AxisLine y0={787} y1={831} />
    <AxisText y={792} t="0,505" />
    <AxisTag y={809} t="0,5000" c="#222222" w={27} />
    <AxisText y={826} t="0,495" />
  </svg>
);

const YearAxis = () => (
  <svg width="1577" height="12" viewBox="23 831 1577 12" className="block">
    {Array.from({ length: 43 }, (_, i) => (
      <g key={i}>
        <line x1={46 + i * 35.4} x2={46 + i * 35.4} y1="831" y2="833" stroke="#777777" />
        <text x={46 + i * 35.4} y="842" textAnchor="middle" fontSize="9.5" fontWeight="700" fill="#333333" textLength="17" lengthAdjust="spacingAndGlyphs">{1987 + i}</text>
      </g>
    ))}
  </svg>
);

const Btn = ({ w, on, children }) => (
  <span className={`flex items-center justify-center h-[15px] shrink-0 rounded-[2px] border ${on ? "bg-[#8ba4ae] border-[#6d8794]" : "bg-[#c0d7df] border-[#8aa6b3]"}`} style={{ width: w }}>{children}</span>
);

const Caret = () => <ChevronDown size={8} strokeWidth={3} className="text-[#333333] shrink-0" />;

const TopBar = () => (
  <div className="h-[19px] shrink-0 flex items-center bg-linear-to-b from-[#bcd6df] to-[#98b8c6] border-t border-[#42606f] border-b-2 border-b-[#7f99a6] text-[#222222] text-[8.7px] [-webkit-text-stroke:0.2px_#222222] whitespace-nowrap">
    <svg width="10" height="12" viewBox="0 0 10 12" className="ml-[5px] shrink-0">
      <path d="M1 5v6M5 2v8M9 1v6" stroke="#20a020" strokeWidth="2" />
    </svg>
    <span className="w-[7px] h-[13px] ml-[6px] bg-[#8ba4ae] border border-[#6d8794] rounded-[2px] shrink-0" />
    <span className="ml-[7px] w-[22px]">UKX</span>
    <Caret />
    <div className="ml-[5px] flex items-center gap-[3.5px]">
      <Btn w={17}>12s</Btn>
      <Btn w={21}>144s</Btn>
      <Btn w={15}>1m</Btn>
      <Btn w={19}>12m</Btn>
      <Btn w={20}>56m</Btn>
      <Btn w={13}>1h</Btn>
      <Btn w={14}>4h</Btn>
      <Btn w={9}>D</Btn>
      <Btn w={11}>W</Btn>
      <Btn w={10}>M</Btn>
      <Btn w={10} on>Q</Btn>
    </div>
    <span className="ml-[7px] w-[41px]">1 trimestre</span>
    <Caret />
    <div className="ml-[6px] flex items-center gap-[3px]">
      <Btn w={19}>5kU</Btn>
      <Btn w={22} on>10kU</Btn>
      <Btn w={22}>35kU</Btn>
    </div>
    <span className="ml-[10px] w-[54px]">10 k unidades</span>
    <Caret />
    <svg width="15" height="15" viewBox="0 0 15 15" className="ml-[7px] shrink-0">
      <path d="M1 7c2-6 4-6 6-2s4 3 7-2" fill="none" stroke="#20a050" strokeWidth="1.5" />
      <path d="M1 10c3-3 5 1 7-1s3-2 6 0" fill="none" stroke="#e03030" strokeWidth="1" />
      <path d="M2 15v-3M6 15v-2M10 15v-4M13 15v-2" stroke="#20a020" strokeWidth="2" />
    </svg>
    <span className="ml-[5px] w-[45px]">Indicadores</span>
    <span className="ml-[5px] flex items-center justify-center w-[9px] h-[15px] border border-[#8aa6b3] rounded-[2px]"><Caret /></span>
    <span className="ml-[10px] w-[7px] h-[10px] bg-[#f0f4f6] border border-[#8aa6b3] shrink-0" />
    <span className="ml-[7px] w-[6px] h-[6px] rounded-full bg-[#8a98a0] shrink-0" />
    <span className="ml-[6px] w-[30px] h-[15px] flex items-center justify-center rounded-[2px] bg-[#f04848] text-white [-webkit-text-stroke:0px]">-0,49 %</span>
    <span className="ml-[4px] w-[45px] text-[8px]">29 may 2026</span>
    <span className="ml-[4px] w-[75px] h-[14px] flex items-center justify-center rounded-[3px] bg-[#c8e8c8] border border-[#a0c8a8] text-[8.2px]">FTSE 100 Cash (1€)</span>
    <div className="ml-auto flex items-center h-full">
      <span className="w-[16px] h-full flex items-center justify-center border-x border-[#8aa6b3]"><RefreshCw size={13} strokeWidth={3} className="text-[#d02828]" /></span>
      <Minus size={10} className="ml-[6px] text-[#7d8d96]" />
      <Copy size={9} className="ml-[2px] text-[#7d8d96]" />
      <X size={12} className="ml-[2px] mr-[1px] text-[#7d8d96]" />
    </div>
  </div>
);

const Tab = ({ w, box = "#f0f4f6", children }) => (
  <span className="flex items-center h-[13px] shrink-0 bg-[#d5e3e8] border border-[#9fb2bb] text-[8.3px] [-webkit-text-stroke:0.2px_#222222] text-[#222222] whitespace-nowrap" style={{ width: w }}>
    {box && <span className="w-[7px] h-[7px] ml-[2px] mr-[2px] border border-[#778] shrink-0" style={{ background: box }} />}
    {children}
  </span>
);

const TabRow = () => (
  <div className="absolute left-[2px] top-[1px] flex items-center">
    <span className="flex items-center justify-center w-[11px] h-[13px] bg-[#d5e3e8] border border-[#9fb2bb] text-[11px] font-bold text-[#e02020] leading-none">+</span>
    <span className="flex items-center justify-center w-[11px] h-[13px] bg-[#d5e3e8] border border-[#9fb2bb] text-[11px] font-bold text-[#20a020] leading-none">+</span>
    <span className="flex items-center justify-center w-[11px] h-[13px] bg-[#d5e3e8] border border-[#9fb2bb]"><span className="w-[8px] h-[8px] rounded-full bg-[#3f6f9c]" /></span>
    <span className="w-[3px]" />
    <Tab w={38}>Precio</Tab>
    <Tab w={14} box={null}><span className="ml-[2px]">≡</span></Tab>
    <Tab w={55}>Cierre (W)</Tab>
    <Tab w={112} box="#777777">Tunel Domenec v4 (t t t t t)</Tab>
    <Tab w={95} box="#d03020">Control Total Doc v.6</Tab>
    <Tab w={118} box="#111111">Multi Avisos (3 f 3 1,5 70 f f)</Tab>
    <Tab w={163}>DS_CotasHist (1 t t t 3 1 1 f f f f f t f f f ...)</Tab>
  </div>
);

const LineIcon = ({ c, x1 = 2, y1 = 7, x2 = 18, y2 = 7, w = 1.5, node }) => (
  <svg width="20" height="14" viewBox="0 0 20 14">
    <line x1={x1} y1={y1} x2={x2} y2={y2} stroke={c} strokeWidth={w} />
    {node && <circle cx={x1 + 1} cy={y1} r="1.5" fill="#ffffff" stroke={c} />}
  </svg>
);

const EllipseIcon = ({ c, f }) => (
  <svg width="20" height="16" viewBox="0 0 20 16">
    <ellipse cx="10" cy="8" rx="7" ry="5" fill={f} stroke={c} strokeWidth="1.5" />
    <circle cx="3" cy="13" r="1.2" fill="#1030e0" />
    <circle cx="17" cy="3" r="1.2" fill="#1030e0" />
  </svg>
);

const rail = [
  [11.5, <ChevronUp size={11} strokeWidth={2.5} className="text-[#5d7a88]" />],
  [16.5, <span className="flex items-center justify-center w-[18px] h-[18px] rounded-[2px] bg-[#8ba4ae] border border-[#7a93a0]"><MousePointer2 size={11} className="text-[#5d6d76]" fill="#7a8a93" /></span>],
  [18.5, <Search size={13} strokeWidth={2.2} className="text-[#333333]" />],
  [19, <span className="relative flex"><span className="absolute left-[1px] top-[5px] w-[9px] h-[7px] border border-dashed border-[#2050d0]" /><Search size={12} strokeWidth={2.2} className="text-[#333333] ml-[4px]" /></span>],
  [19, <span className="relative flex"><Bell size={13} className="text-[#8a8010]" fill="#f0e020" /><X size={9} strokeWidth={3} className="absolute -right-[4px] -top-[1px] text-[#1030d0]" /></span>],
  [19, <Bell size={13} className="text-[#a89810]" fill="#f0e020" />],
  [19, <svg width="20" height="14" viewBox="0 0 20 14"><path d="M2 12L6 3l2 6" fill="none" stroke="#1030e0" strokeWidth="1.5" /><path d="M6 6h10M6 10h8" stroke="#d08070" strokeWidth="1.5" /><text x="14" y="13" fontSize="8" fontWeight="700" fill="#1030e0">F</text></svg>],
  [19, <svg width="20" height="14" viewBox="0 0 20 14"><path d="M3 5h14" stroke="#d08070" strokeWidth="1.5" /><path d="M3 9h9" stroke="#1030e0" strokeWidth="1.5" /><text x="14" y="13" fontSize="8" fontWeight="700" fill="#1030e0">F</text></svg>],
  [17, <svg width="18" height="14" viewBox="0 0 18 14"><path d="M3 4h12v8H3z" fill="none" stroke="#2050d0" /><circle cx="15" cy="3" r="1.5" fill="#1030e0" /><circle cx="3" cy="12" r="1.5" fill="#1030e0" /></svg>],
  [16, <svg width="18" height="14" viewBox="0 0 18 14"><path d="M3 3h12v8H3z" fill="#a0a8ae" stroke="#e02020" strokeWidth="1.3" /><circle cx="15" cy="2" r="1.5" fill="#1030e0" /><circle cx="3" cy="12" r="1.5" fill="#1030e0" /></svg>],
  [18.5, <ArrowDown size={14} strokeWidth={3} className="text-[#222222] rotate-[-135deg]" />],
  [19.5, <span className="flex items-center justify-center w-[13px] h-[13px] rounded-[2px] border border-[#5580e0] text-[10px] leading-none font-bold text-[#222222]">T</span>],
  [18.5, <span className="flex items-center justify-center w-[13px] h-[13px] rounded-full border border-[#5590e0] text-[10px] leading-none font-bold text-[#207020]">T</span>],
  [18, <svg width="16" height="14" viewBox="0 0 16 14"><line x1="4" y1="11" x2="12" y2="3" stroke="#333333" strokeWidth="1.5" /><circle cx="4" cy="11" r="2" fill="#ffffff" stroke="#333333" /><circle cx="12" cy="3" r="2" fill="#ffffff" stroke="#333333" /></svg>],
  [18.5, <LineIcon c="#80f080" x1={9} x2={19} node />],
  [18.5, <LineIcon c="#30b030" x1={9} x2={19} node />],
  [18, <LineIcon c="#107010" x1={9} x2={19} node w={2} />],
  [19, <LineIcon c="#e02020" x1={9} x2={19} node />],
  [18.5, <svg width="18" height="14" viewBox="0 0 18 14"><rect x="1" y="5" width="16" height="5" transform="rotate(-35 9 7)" fill="#a0a8ae" stroke="#555555" /></svg>],
  [17, <svg width="16" height="14" viewBox="0 0 16 14"><rect x="1" y="0" width="14" height="6" fill="#a8c8a8" /><rect x="1" y="8" width="14" height="5" fill="#c8a8b0" /><path d="M1 10l4-4 3 2 6-5" fill="none" stroke="#b0b8d8" /></svg>],
  [18, <EllipseIcon c="#e02020" f="#b0a0a8" />],
  [19, <EllipseIcon c="#907040" f="#a8a090" />],
  [18.5, <EllipseIcon c="#208030" f="#80a888" />],
  [18, <EllipseIcon c="#20e020" f="#90d8a0" />],
  [18.5, <LineIcon c="#333333" x1={2} y1={13} x2={18} y2={1} />],
  [19, <LineIcon c="#30b030" x1={2} y1={13} x2={18} y2={1} />],
  [18.5, <LineIcon c="#e02020" x1={2} y1={13} x2={18} y2={1} />],
  [18, <LineIcon c="#333333" x1={4} x2={19} />],
  [18.5, <LineIcon c="#f08878" x1={4} x2={19} />],
  [18.5, <LineIcon c="#20f020" x1={4} x2={19} w={2} />],
  [18, <LineIcon c="#107010" x1={4} x2={19} w={2} />],
  [18.5, <LineIcon c="#e02020" x1={4} x2={19} />],
  [18.5, <LineIcon c="#7aa8f0" x1={4} x2={19} />],
  [18.5, <LineIcon c="#1020a0" x1={4} x2={19} />],
  [18, <svg width="6" height="16" viewBox="0 0 6 16"><line x1="3" y1="0" x2="3" y2="16" stroke="#444444" strokeWidth="1.5" /></svg>],
  [17.5, <svg width="20" height="14" viewBox="0 0 20 14"><path d="M2 13L12 2M2 13h14" stroke="#e04030" fill="none" /><circle cx="17" cy="4" r="2" fill="none" stroke="#1030e0" /></svg>],
  [19, <svg width="18" height="16" viewBox="0 0 18 16"><circle cx="9" cy="8" r="6" fill="none" stroke="#e08050" strokeWidth="1.3" /><circle cx="9" cy="8" r="1.3" fill="#1030e0" /></svg>],
  [18.5, <svg width="20" height="16" viewBox="0 0 20 16"><path d="M1 4l3 10 4-8 3 6 7-10" fill="none" stroke="#6080c0" /><g fill="#1030c0"><circle cx="1.5" cy="4" r="1.3" /><circle cx="4" cy="14" r="1.3" /><circle cx="8" cy="6" r="1.3" /><circle cx="11" cy="12" r="1.3" /><circle cx="18" cy="2" r="1.3" /></g></svg>],
  [18, <svg width="20" height="14" viewBox="0 0 20 14"><path d="M3 3l4 8 9-9" fill="none" stroke="#6080c0" /><g fill="#1030c0"><circle cx="3" cy="3" r="1.3" /><circle cx="7" cy="11" r="1.3" /><circle cx="16" cy="2" r="1.3" /><circle cx="14" cy="12" r="1.3" /></g></svg>],
  [19, <Check size={16} strokeWidth={4} className="text-[#40b040]" />],
  [18.5, <ThumbsUp size={15} strokeWidth={1.5} className="text-[#207020]" fill="#50c050" />],
  [18, <X size={17} strokeWidth={5} className="text-[#e01010]" />],
];

const LeftRail = () => (
  <div className="w-[23px] shrink-0 flex flex-col items-center bg-linear-to-r from-[#a8c2ce] to-[#9cb8c4] border-r-2 border-[#7f99a6]">
    {rail.map(([h, icon], i) => <div key={i} className="w-full flex items-center justify-center shrink-0" style={{ height: h }}>{icon}</div>)}
    <div className="w-full h-[9px] mt-[3px] flex items-center justify-center bg-[#c6d8df] border-y border-[#8aa6b3]"><ChevronDown size={8} strokeWidth={3} className="text-[#333333]" /></div>
    <div className="w-full flex-1 flex flex-col items-center justify-between pt-[6px] pb-[1px]">
      <svg width="18" height="18" viewBox="0 0 18 18"><rect x="5" y="4" width="10" height="12" fill="#e0e4e6" stroke="#555555" /><circle cx="5" cy="4" r="3" fill="#208030" /><path d="M9 10l4 4M13 10l-4 4" stroke="#333333" strokeWidth="1.5" /></svg>
      <MoreHorizontal size={14} strokeWidth={3} className="text-[#333333]" />
    </div>
  </div>
);

const BottomBar = () => (
  <div className="h-[18px] shrink-0 flex items-center bg-linear-to-b from-[#a8c4d0] to-[#bcd4dc] border-t-2 border-[#7f99a6]">
    <div className="w-[23px] h-full flex items-center justify-center bg-[#93aeba] border-r border-[#7f99a6] shrink-0">
      <svg width="14" height="14" viewBox="0 0 14 14"><path d="M1 13L3 2l3 7 3-8 3 9" fill="none" stroke="#c04040" strokeWidth="1.3" /><path d="M5 12l7-10" stroke="#c0a020" strokeWidth="2" /></svg>
    </div>
    <Share2 size={13} strokeWidth={2} className="ml-[2px] text-[#f4f6f8] shrink-0" />
    <MessageSquare size={12} className="ml-[5px] text-[#2060c0] shrink-0" fill="#60a0e0" />
    <svg width="11" height="13" viewBox="0 0 11 13" className="ml-[6px] shrink-0"><rect x="1" y="1" width="9" height="11" fill="#d8d8d8" stroke="#666666" /><path d="M3 5h5" stroke="#d03030" /><path d="M3 8h5" stroke="#30a030" /></svg>
    <svg width="13" height="13" viewBox="0 0 13 13" className="ml-[5px] shrink-0"><path d="M1 2h8M3 6h10M1 10h8" stroke="#20a030" strokeWidth="2" /><path d="M6 0v13" stroke="#d04030" /></svg>
    <svg width="14" height="13" viewBox="0 0 14 13" className="ml-[5px] shrink-0"><rect x="1" y="1" width="9" height="7" fill="#e8f0f8" stroke="#2060c0" /><rect x="4" y="4" width="9" height="8" fill="#f4f8fc" stroke="#2060c0" /><path d="M5 10l3-3 2 2 2-3" fill="none" stroke="#30a030" /></svg>
    <ChevronsLeft size={10} className="ml-[3px] text-[#5d7a88] shrink-0" />
    <span className="ml-[2px] w-[11px] h-[11px] flex items-center justify-center bg-[#c6d8df] border border-[#8aa6b3] shrink-0"><ChevronLeft size={8} strokeWidth={3} className="text-[#333333]" /></span>
    <div className="ml-[1px] flex-1 h-[12px] flex bg-[#a8c4d0] border border-[#8aa6b3]">
      <span className="w-[66px] h-full bg-[#bad0da] border-r border-[#8aa6b3]" />
    </div>
    <span className="w-[11px] h-[11px] flex items-center justify-center bg-[#c6d8df] border border-[#8aa6b3] shrink-0"><ChevronRight size={8} strokeWidth={3} className="text-[#333333]" /></span>
    <Undo2 size={13} strokeWidth={2.5} className="ml-[10px] text-[#2060d0] shrink-0" />
    <Redo2 size={13} strokeWidth={2.5} className="ml-[5px] text-[#8aa8d8] shrink-0" />
    <RefreshCw size={12} strokeWidth={3} className="ml-[5px] text-[#b03030] shrink-0" />
    <Search size={14} strokeWidth={2.5} className="ml-[5px] text-[#222222] shrink-0" />
    <ZoomOut size={14} strokeWidth={2.5} className="ml-[4px] text-[#222222] shrink-0" />
    <ZoomIn size={14} strokeWidth={2.5} className="ml-[4px] text-[#222222] shrink-0" />
    <ArrowDown size={12} strokeWidth={3} className="ml-[4px] mr-[1px] text-[#2060d0] shrink-0" />
  </div>
);

export default function App() {
  return (
    <div className="w-[1600px] h-[861px] flex flex-col overflow-hidden bg-white font-['Liberation_Sans',Arial,sans-serif]">
      <TopBar />
      <div className="flex flex-1 min-h-0">
        <LeftRail />
        <div className="flex-1 min-w-0 flex flex-col bg-white">
          <div className="relative h-[579px] shrink-0">
            <MainChart />
            <TabRow />
            <div className="absolute left-[9px] top-[12px] text-[32.6px] leading-[38px] font-bold text-black">
              <div>UKX, Q</div>
              <div>FTSE 100 Cash (1€)</div>
            </div>
          </div>
          <div className="relative h-[69px] shrink-0 border-t-2 border-[#a9b8bf]">
            <SistemaPanel />
            <PanelTag title="Sistema de trenes Doc v4 (f f)" icon="#777777" w={125} />
          </div>
          <div className="relative h-[61px] shrink-0 border-t-2 border-[#a9b8bf]">
            <WillyPanel />
            <PanelTag title="Willy Doc (t)" w={61} />
          </div>
          <div className="relative h-[57px] shrink-0 border-t-2 border-[#a9b8bf]">
            <AwesomePanel />
            <PanelTag title="Awesome Evolution Doc" w={105} />
          </div>
          <div className="relative h-[46px] shrink-0 border-t-2 border-[#a9b8bf]">
            <FuerzaPanel />
            <PanelTag title="Barra Fuerza Fondo Mercado v4 (f)" w={145} />
          </div>
          <div className="h-[12px] shrink-0">
            <YearAxis />
          </div>
        </div>
      </div>
      <BottomBar />
    </div>
  );
}
